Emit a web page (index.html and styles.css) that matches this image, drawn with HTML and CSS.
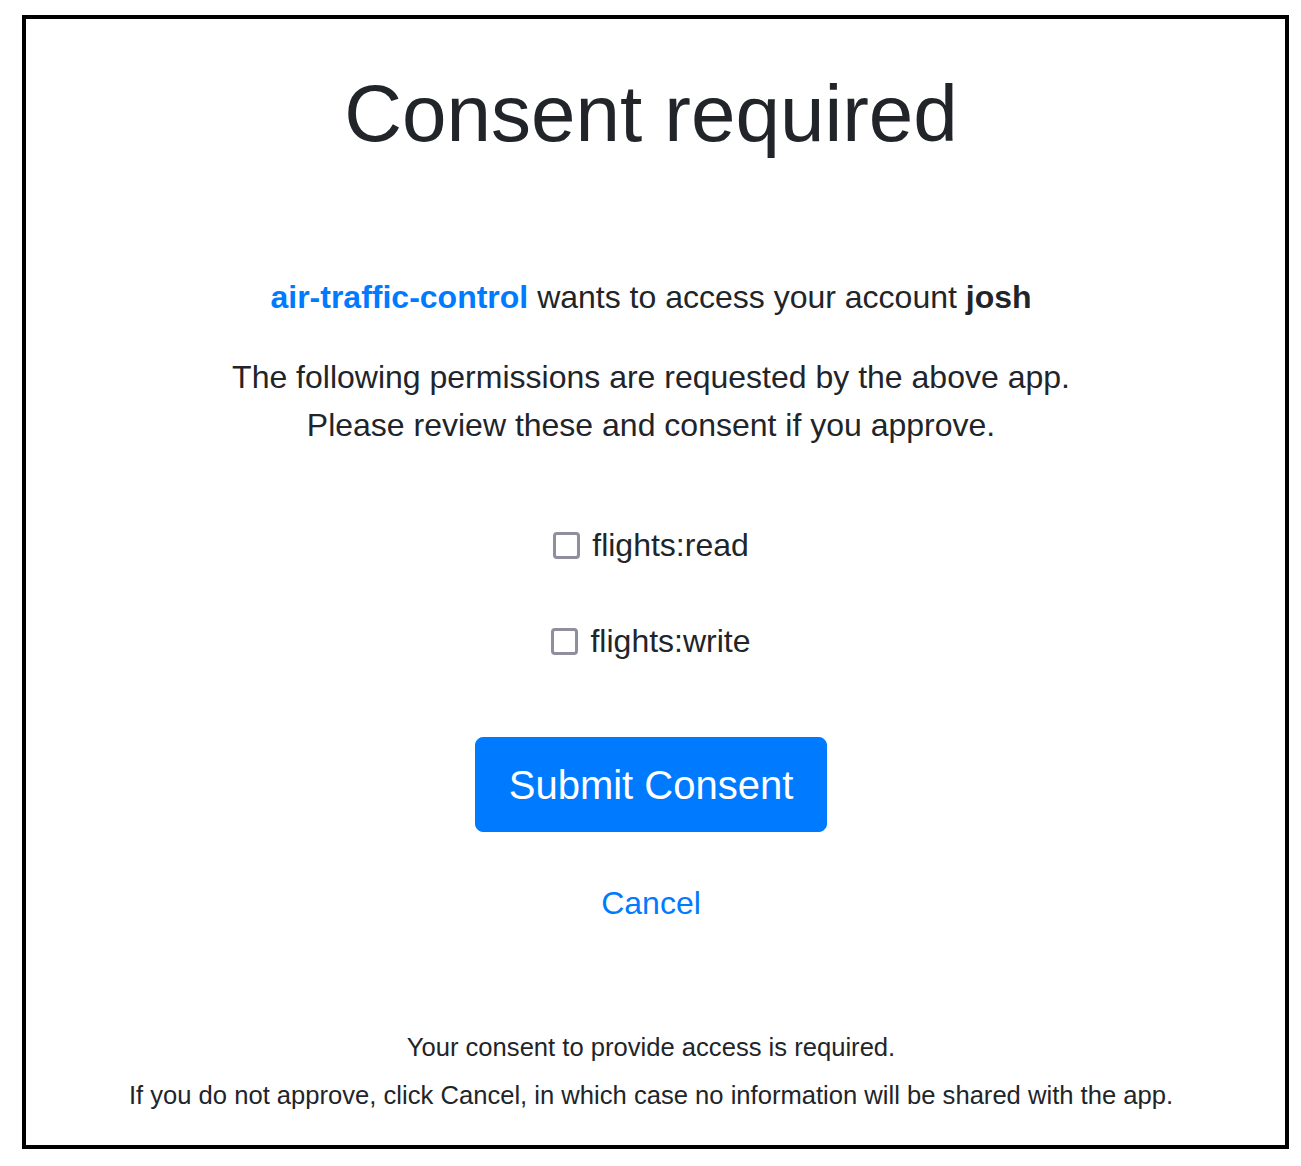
FILE: index.html
```html
<!DOCTYPE html>
<html lang="en">
<head>
<meta charset="utf-8">
<title>Consent required</title>
<link rel="stylesheet" href="styles.css">
</head>
<body>
<main class="frame">
  <h1 class="title">Consent required</h1>
  <p class="intro"><a class="app" href="#">air-traffic-control</a> wants to access your account <strong>josh</strong></p>
  <p class="desc">The following permissions are requested by the above app.<br>Please review these and consent if you approve.</p>
  <form class="form">
    <label class="scope"><input type="checkbox" class="check"><span>flights:read</span></label>
    <label class="scope"><input type="checkbox" class="check"><span>flights:write</span></label>
    <button type="button" class="submit">Submit Consent</button>
    <a class="cancel" href="#">Cancel</a>
  </form>
  <div class="note">
    <p class="note-line">Your consent to provide access is required.</p>
    <p class="note-line">If you do not approve, click Cancel, in which case no information will be shared with the app.</p>
  </div>
</main>
</body>
</html>
```
FILE: styles.css
```css
html, body {
  margin: 0;
  padding: 0;
  background: #ffffff;
}
body {
  font-family: "Liberation Sans", Arial, sans-serif;
  color: #212529;
}
.frame {
  box-sizing: border-box;
  width: 1267px;
  height: 1134px;
  margin: 15px 0 0 22px;
  padding-right: 9px;
  border: 4px solid #000;
  display: flex;
  flex-direction: column;
  align-items: center;
  text-align: center;
}
.title {
  margin: 47px 0 0;
  font-size: 80px;
  font-weight: 400;
  line-height: 96px;
}
.intro {
  margin: 111px 0 0;
  font-size: 32px;
  line-height: 48px;
}
.intro strong { font-weight: 700; }
.app {
  color: #007bff;
  font-weight: 700;
  text-decoration: none;
}
.desc {
  margin: 32px 0 0;
  font-size: 32px;
  line-height: 48px;
}
.form {
  display: flex;
  flex-direction: column;
  align-items: center;
  margin-top: 72px;
}
.scope {
  display: flex;
  align-items: center;
  gap: 12px;
  font-size: 32px;
  line-height: 48px;
}
.scope + .scope { margin-top: 48px; }
.check {
  appearance: none;
  -webkit-appearance: none;
  box-sizing: border-box;
  width: 27px;
  height: 27px;
  margin: 0;
  border: 3px solid #8f8f9d;
  border-radius: 4px;
  background: #fff;
}
.submit {
  margin-top: 72px;
  box-sizing: border-box;
  height: 95px;
  padding: 0 33px;
  border: 1px solid #007bff;
  border-radius: 8px;
  background: #007bff;
  color: #fff;
  font-family: "Liberation Sans", Arial, sans-serif;
  font-size: 40px;
  line-height: 60px;
}
.cancel {
  margin-top: 47px;
  color: #007bff;
  text-decoration: none;
  font-size: 32px;
  line-height: 48px;
}
.note {
  margin-top: 96px;
}
.note-line {
  margin: 0;
  font-size: 25.6px;
  line-height: 48px;
}
```
